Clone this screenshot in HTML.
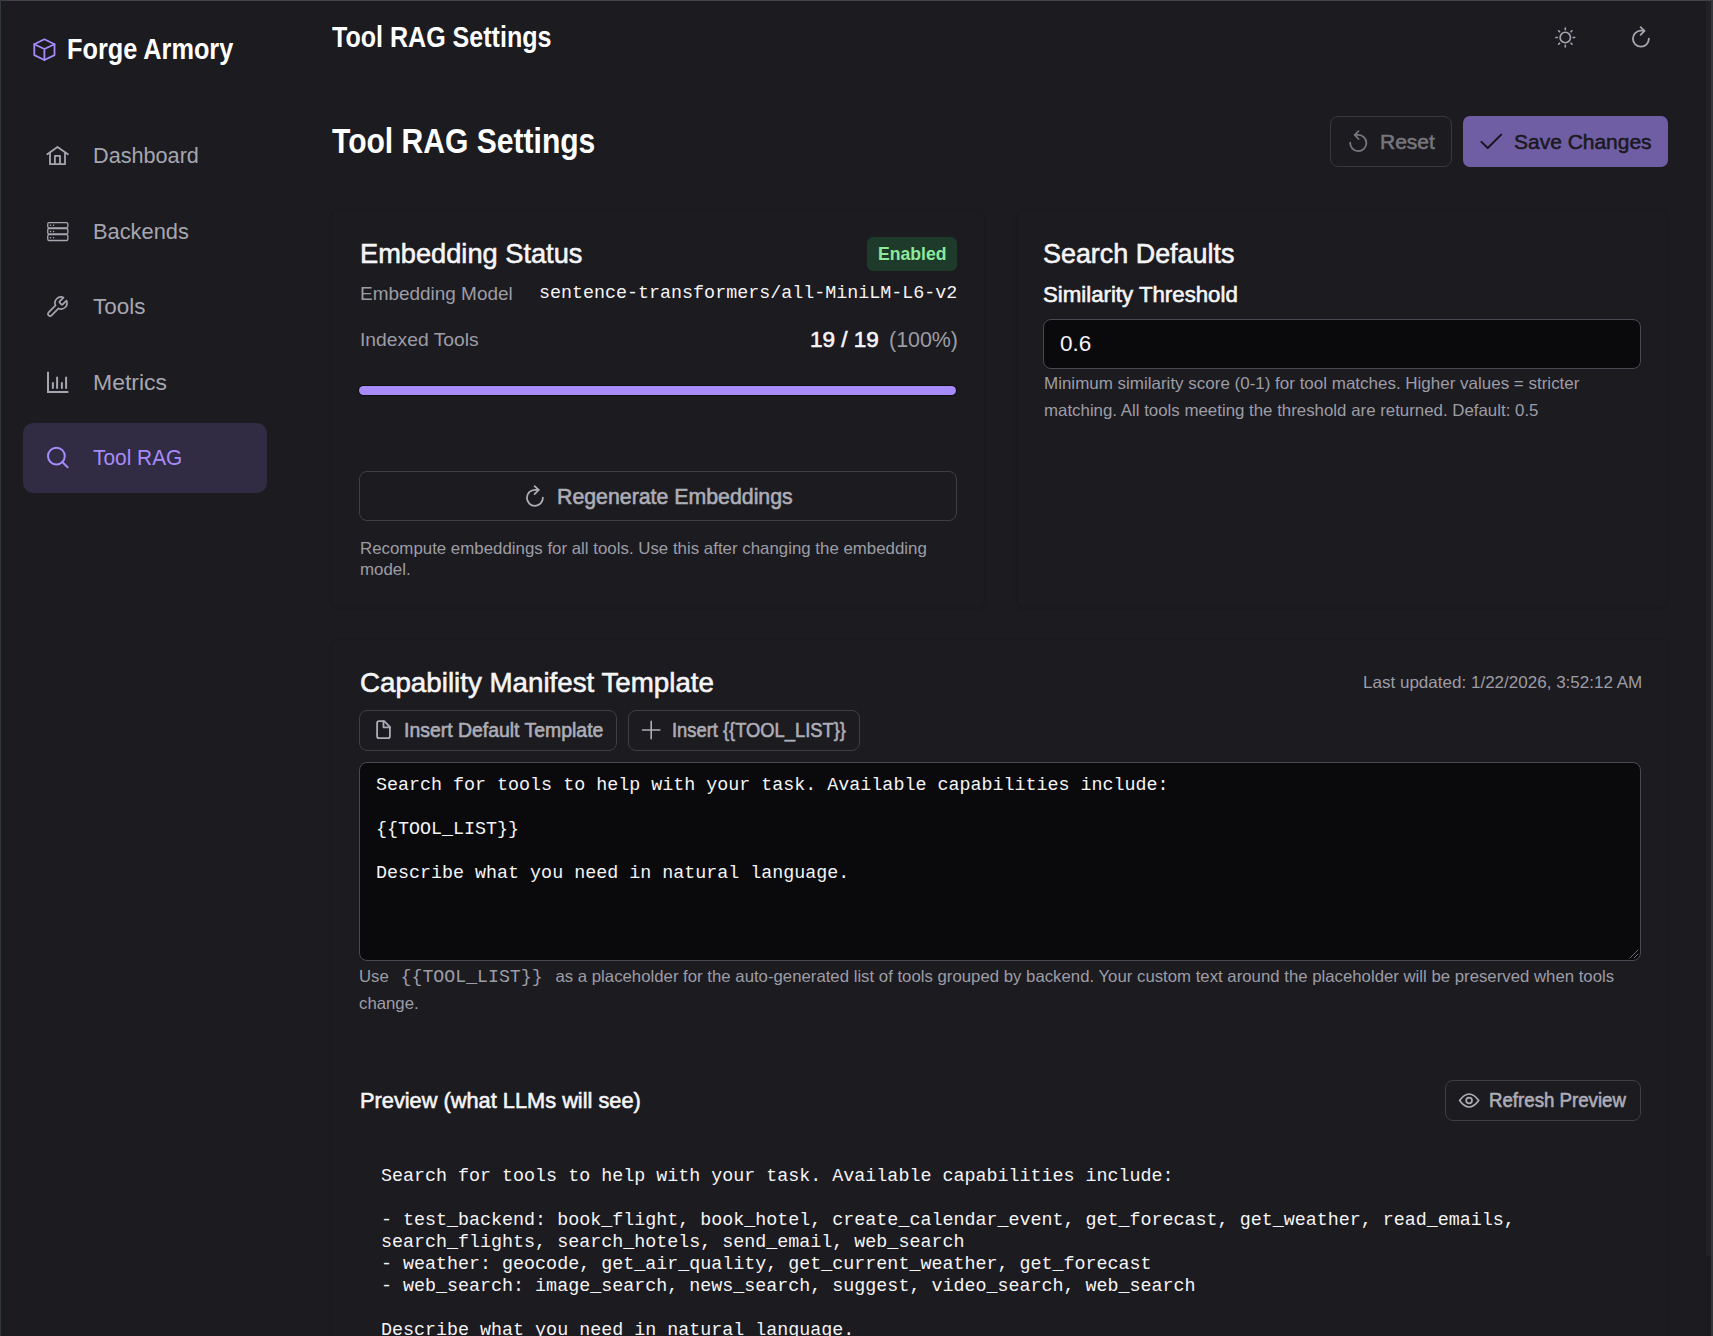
<!DOCTYPE html>
<html>
<head>
<meta charset="utf-8">
<title>Tool RAG Settings</title>
<style>
html,body{margin:0;padding:0;}
body{width:1713px;height:1336px;overflow:hidden;background:#1c1b20;position:relative;font-family:"Liberation Sans",sans-serif;}
.t{position:absolute;white-space:nowrap;transform-origin:0 0;line-height:1;}
.m{font-family:"Liberation Mono",monospace;}
.box{position:absolute;box-sizing:border-box;}
svg{position:absolute;overflow:visible;}
.ic{fill:none;stroke-linecap:round;stroke-linejoin:round;}
</style>
</head>
<body>
<div class="box" style="left:0px;top:0px;width:1713px;height:1px;background:#444249;"></div>
<div class="box" style="left:0px;top:0px;width:1px;height:1336px;background:#32373b;"></div>
<div class="box" style="left:1706px;top:1px;width:5px;height:1255px;background:#222226;"></div>
<div class="box" style="left:1711px;top:0px;width:2px;height:1336px;background:#32373b;"></div>
<svg style="left:28px;top:34px" width="32" height="32" viewBox="0 0 32 32"><g class="ic" stroke="#a78bfa" stroke-width="1.8"><path d="M16.4 5.3L26.5 10.2V21.1L16.4 26L6.3 21.1V10.2Z"/><path d="M6.3 10.2L16.4 15L26.5 10.2M16.4 15V26"/></g></svg>
<svg style="left:42px;top:140px" width="32" height="32" viewBox="0 0 32 32"><g class="ic" stroke="#a6a6b0" stroke-width="1.8" stroke-linecap="square" stroke-linejoin="miter"><path d="M5.3 14.3L15.5 6.9L25.9 14.3"/><path d="M8 12.6V24.2H23V12.6"/><path d="M12.9 24.2V15.9H18V24.2"/></g></svg>
<svg style="left:42px;top:216px" width="32" height="32" viewBox="0 0 32 32"><g class="ic" stroke="#a6a6b0" stroke-width="1.3"><rect x="5.75" y="6.6" width="20.1" height="5.2" rx="1.3"/><rect x="5.75" y="12.5" width="20.1" height="5.5" rx="1.3"/><rect x="5.75" y="18.7" width="20.1" height="5.8" rx="1.3"/></g><g fill="#a6a6b0"><circle cx="8.5" cy="9.2" r=".8"/><circle cx="11.6" cy="9.2" r=".8"/><circle cx="8.5" cy="15.6" r=".8"/><circle cx="11.6" cy="15.6" r=".8"/><circle cx="8.5" cy="21.8" r=".8"/><circle cx="11.6" cy="21.8" r=".8"/></g></svg>
<svg style="left:45.3px;top:295px" width="24" height="24" viewBox="0 0 24 24"><path class="ic" stroke="#a6a6b0" stroke-width="1.7" d="M14.7 6.3a1 1 0 0 0 0 1.4l1.6 1.6a1 1 0 0 0 1.4 0l3.77-3.77a6 6 0 0 1-7.94 7.94l-6.91 6.91a2.12 2.12 0 0 1-3-3l6.91-6.91a6 6 0 0 1 7.94-7.94l-3.76 3.76z"/></svg>
<svg style="left:42px;top:366px" width="32" height="32" viewBox="0 0 32 32"><g class="ic" stroke="#a6a6b0" stroke-width="2"><path d="M6 5.8V26.1H26.4" stroke-linecap="butt" stroke-linejoin="miter"/><path d="M10.9 17V22M15.1 11.6V22M19.9 17V22M24.1 11.6V22"/></g></svg>
<div class="box" style="left:23px;top:423px;width:244px;height:70px;border-radius:10px;background:#312b44;"></div>
<svg style="left:42px;top:442px" width="32" height="32" viewBox="0 0 32 32"><g class="ic" stroke="#a78bfa" stroke-width="2"><circle cx="14.4" cy="14.1" r="8.4"/><path d="M20.6 20.3L25.6 25.2"/></g></svg>
<svg style="left:1549px;top:21px" width="32" height="32" viewBox="0 0 32 32"><g class="ic" stroke="#a6a6b0" stroke-width="1.6"><circle cx="16.3" cy="16.5" r="5.2"/><path d="M16.3 7.1V8.6M16.3 24.4V25.9M6.9 16.5H8.4M24.2 16.5H25.7M9.6 9.8L10.6 10.8M22 22.2L23 23.2M9.6 23.2L10.6 22.2M22 10.8L23 9.8"/></g></svg>
<svg style="left:1625px;top:21px" width="32" height="32" viewBox="0 0 32 32"><g class="ic" stroke="#a6a6b0" stroke-width="1.8"><path d="M23.9 17.6A8 8 0 1 1 15.9 9.7H19.4"/><path d="M15.6 6.2L19.4 9.9L15.6 13.8"/></g></svg>
<div class="box" style="left:1330px;top:116px;width:122px;height:51px;border:1px solid #38373d;border-radius:8px;"></div>
<svg style="left:1342px;top:125px" width="32" height="32" viewBox="0 0 32 32"><g class="ic" stroke="#77767d" stroke-width="1.8"><path d="M8.2 17.7A8.1 8.1 0 1 0 16.3 9.9H12.8"/><path d="M16.5 6.2L12.7 9.9L16.5 14"/></g></svg>
<div class="box" style="left:1463px;top:116px;width:205px;height:51px;border-radius:7px;background:#705ea5;"></div>
<svg style="left:1475px;top:125px" width="32" height="32" viewBox="0 0 32 32"><path class="ic" stroke="#17161b" stroke-width="2" d="M6.4 16.9L12.7 23L26.2 9.6"/></svg>
<div class="box" style="left:331px;top:209px;width:654px;height:399px;border:1px solid #1a191e;border-radius:8px;box-shadow:0 1px 2px rgba(0,0,0,.1);"></div>
<div class="box" style="left:867px;top:237px;width:90px;height:34px;border-radius:6px;background:#1d3a2b;"></div>
<div class="t m" style="left:539px;top:285px;font-size:18.35px;color:#f5f5f7;">sentence-transformers/all-MiniLM-L6-v2</div>
<div class="box" style="left:358px;top:385px;width:599px;height:11px;border-radius:6px;background:#0e0e11;"></div>
<div class="box" style="left:359px;top:386px;width:597px;height:9px;border-radius:5px;background:#a78bfa;"></div>
<div class="box" style="left:359px;top:471px;width:598px;height:50px;border:1px solid #3e3e45;border-radius:8px;"></div>
<svg style="left:519px;top:480px" width="32" height="32" viewBox="0 0 32 32"><g class="ic" stroke="#adadb6" stroke-width="1.8"><path d="M23.9 17.6A8 8 0 1 1 15.9 9.8H19.6"/><path d="M15.6 6.1L19.7 9.9L15.6 14.1"/></g></svg>
<div class="box" style="left:1016px;top:209px;width:652px;height:399px;border:1px solid #1a191e;border-radius:8px;box-shadow:0 1px 2px rgba(0,0,0,.1);"></div>
<div class="box" style="left:1043px;top:319px;width:598px;height:50px;border:1px solid #4a4953;border-radius:8px;background:#0a0a0c;"></div>
<div class="box" style="left:331px;top:639px;width:1337px;height:800px;border:1px solid #1a191e;border-radius:8px;box-shadow:0 1px 2px rgba(0,0,0,.1);"></div>
<div class="box" style="left:359px;top:710px;width:258px;height:41px;border:1px solid #3e3e45;border-radius:8px;"></div>
<svg style="left:367px;top:714px" width="32" height="32" viewBox="0 0 32 32"><g class="ic" stroke="#adadb6" stroke-width="1.8"><path d="M17.2 7.1H12.1A2 2 0 0 0 10.1 9.1V22.2A2 2 0 0 0 12.1 24.2H20.9A2 2 0 0 0 22.9 22.2V12.9Z"/><path d="M16.5 7.1V13.3H22.9"/></g></svg>
<div class="box" style="left:628px;top:710px;width:232px;height:41px;border:1px solid #3e3e45;border-radius:8px;"></div>
<svg style="left:635px;top:714px" width="32" height="32" viewBox="0 0 32 32"><g class="ic" stroke="#adadb6" stroke-width="1.6"><path d="M16.2 7.3V24.7M7.5 16H24.9"/></g></svg>
<div class="box" style="left:359px;top:762px;width:1282px;height:199px;border:1px solid #4a4953;border-radius:8px;background:#0a0a0c;"></div>
<svg style="left:1625px;top:945px" width="16" height="16" viewBox="0 0 16 16"><g stroke="#6b6a72" stroke-width="1" stroke-linecap="round"><path d="M13 5L5 13M13 9L9 13"/></g></svg>
<pre class="t m" style="white-space:pre;left:376px;top:775px;margin:0;font-size:18.35px;line-height:22px;color:#f5f5f7;">Search for tools to help with your task. Available capabilities include:

{{TOOL_LIST}}

Describe what you need in natural language.</pre>
<div class="t" style="left:359px;top:968px;font-size:16.5px;color:#9d9da6;transform:scaleX(1.016);">Use <span class="m" style="font-size:17.93px;margin-left:7px;margin-right:8px;">{{TOOL_LIST}}</span> as a placeholder for the auto-generated list of tools grouped by backend. Your custom text around the placeholder will be preserved when tools</div>
<div class="box" style="left:1445px;top:1080px;width:196px;height:41px;border:1px solid #3e3e45;border-radius:8px;"></div>
<svg style="left:1453px;top:1084px" width="32" height="32" viewBox="0 0 32 32"><g class="ic" stroke="#adadb6" stroke-width="1.7"><path d="M6.6 16.5Q16.1 3.5 25.7 16.5Q16.1 29.5 6.6 16.5Z"/><circle cx="16.1" cy="16.5" r="2.9"/></g></svg>
<pre class="t m" style="white-space:pre;left:381px;top:1166px;margin:0;font-size:18.35px;line-height:22px;color:#f5f5f7;">Search for tools to help with your task. Available capabilities include:

- test_backend: book_flight, book_hotel, create_calendar_event, get_forecast, get_weather, read_emails,
search_flights, search_hotels, send_email, web_search
- weather: geocode, get_air_quality, get_current_weather, get_forecast
- web_search: image_search, news_search, suggest, video_search, web_search

Describe what you need in natural language.</pre>
<div class="t" id="brand" style="left:67px;top:35px;font-size:29px;font-weight:700;color:#fff;transform:scale(0.872,1.0);">Forge Armory</div>
<div class="t" id="dash" style="left:93px;top:145px;font-size:23px;font-weight:400;color:#a6a6b0;transform:scale(0.941,0.97);">Dashboard</div>
<div class="t" id="back" style="left:93px;top:221px;font-size:23px;font-weight:400;color:#a6a6b0;transform:scale(0.949,0.97);">Backends</div>
<div class="t" id="tools" style="left:93px;top:296px;font-size:23px;font-weight:400;color:#a6a6b0;transform:scale(0.975,0.97);">Tools</div>
<div class="t" id="metrics" style="left:93px;top:372px;font-size:23px;font-weight:400;color:#a6a6b0;transform:scale(1.0,0.97);">Metrics</div>
<div class="t" id="rag" style="left:93px;top:447px;font-size:23px;font-weight:400;color:#a78bfa;transform:scale(0.907,0.97);">Tool RAG</div>
<div class="t" id="hdr" style="left:332px;top:23px;font-size:29px;font-weight:700;color:#fff;transform:scale(0.864,1.0);">Tool RAG Settings</div>
<div class="t" id="title" style="left:332px;top:123px;font-size:35px;font-weight:700;color:#fff;transform:scale(0.859,1.0);">Tool RAG Settings</div>
<div class="t" id="reset" style="left:1380px;top:132px;font-size:23px;font-weight:400;color:#77767d;transform:scale(0.913,0.9);-webkit-text-stroke:0.6px currentColor;">Reset</div>
<div class="t" id="save" style="left:1514px;top:132px;font-size:23px;font-weight:400;color:#1a1920;transform:scale(0.912,0.9);-webkit-text-stroke:0.6px currentColor;">Save Changes</div>
<div class="t" id="embst" style="left:360px;top:239px;font-size:28.5px;font-weight:400;color:#f5f5f7;transform:scale(0.955,1.0);-webkit-text-stroke:0.6px currentColor;">Embedding Status</div>
<div class="t" id="enabled" style="left:878px;top:244px;font-size:19px;font-weight:700;color:#8ce99a;transform:scale(0.928,1.0);">Enabled</div>
<div class="t" id="embmodel" style="left:360px;top:284px;font-size:19px;font-weight:400;color:#9d9da6;transform:scale(0.997,1.0);">Embedding Model</div>
<div class="t" id="indexed" style="left:360px;top:330px;font-size:19px;font-weight:400;color:#9d9da6;transform:scale(1.015,1.0);">Indexed Tools</div>
<div class="t" id="n19" style="left:810px;top:329px;font-size:22.5px;font-weight:400;color:#f5f5f7;-webkit-text-stroke:0.6px currentColor;">19 / 19</div>
<div class="t" id="pct" style="left:889px;top:329px;font-size:22.5px;font-weight:400;color:#9d9da6;transform:scale(0.951,1.0);">(100%)</div>
<div class="t" id="regen" style="left:557px;top:486px;font-size:22.5px;font-weight:400;color:#adadb6;transform:scale(0.947,1.0);-webkit-text-stroke:0.6px currentColor;">Regenerate Embeddings</div>
<div class="t" id="recomp1" style="left:360px;top:540px;font-size:16.5px;font-weight:400;color:#9d9da6;transform:scale(1.0215,1.0);">Recompute embeddings for all tools. Use this after changing the embedding</div>
<div class="t" id="recomp2" style="left:360px;top:561px;font-size:16.5px;font-weight:400;color:#9d9da6;transform:scale(1.0215,1.0);">model.</div>
<div class="t" id="searchdef" style="left:1043px;top:239px;font-size:28.5px;font-weight:400;color:#f5f5f7;transform:scale(0.944,1.0);-webkit-text-stroke:0.6px currentColor;">Search Defaults</div>
<div class="t" id="simthr" style="left:1043px;top:284px;font-size:22.5px;font-weight:400;color:#f5f5f7;transform:scale(0.988,1.0);-webkit-text-stroke:0.6px currentColor;">Similarity Threshold</div>
<div class="t" id="v06" style="left:1060px;top:333px;font-size:22.5px;font-weight:400;color:#f5f5f7;">0.6</div>
<div class="t" id="help1" style="left:1044px;top:375px;font-size:16.5px;font-weight:400;color:#9d9da6;transform:scale(1.029,1.0);">Minimum similarity score (0-1) for tool matches. Higher values = stricter</div>
<div class="t" id="help2" style="left:1044px;top:402px;font-size:16.5px;font-weight:400;color:#9d9da6;transform:scale(1.021,1.0);">matching. All tools meeting the threshold are returned. Default: 0.5</div>
<div class="t" id="cap" style="left:360px;top:668px;font-size:28.5px;font-weight:400;color:#f5f5f7;transform:scale(0.973,1.0);-webkit-text-stroke:0.6px currentColor;">Capability Manifest Template</div>
<div class="t" id="lastupd" style="left:1363px;top:674px;font-size:16.5px;font-weight:400;color:#9d9da6;transform:scale(1.032,1.0);">Last updated: 1/22/2026, 3:52:12 AM</div>
<div class="t" id="ins1" style="left:404px;top:721px;font-size:19.5px;font-weight:400;color:#adadb6;transform:scale(0.996,1.0);-webkit-text-stroke:0.6px currentColor;">Insert Default Template</div>
<div class="t" id="ins2" style="left:672px;top:721px;font-size:19.5px;font-weight:400;color:#adadb6;transform:scale(0.94,1.0);-webkit-text-stroke:0.6px currentColor;">Insert {{TOOL_LIST}}</div>
<div class="t" id="use2" style="left:359px;top:995px;font-size:16.5px;font-weight:400;color:#9d9da6;transform:scale(1.016,1.0);">change.</div>
<div class="t" id="preview" style="left:360px;top:1090px;font-size:22.5px;font-weight:400;color:#f5f5f7;transform:scale(0.968,1.0);-webkit-text-stroke:0.6px currentColor;">Preview (what LLMs will see)</div>
<div class="t" id="refresh" style="left:1489px;top:1091px;font-size:19.5px;font-weight:400;color:#adadb6;transform:scale(0.957,1.0);-webkit-text-stroke:0.6px currentColor;">Refresh Preview</div>
</body>
</html>
